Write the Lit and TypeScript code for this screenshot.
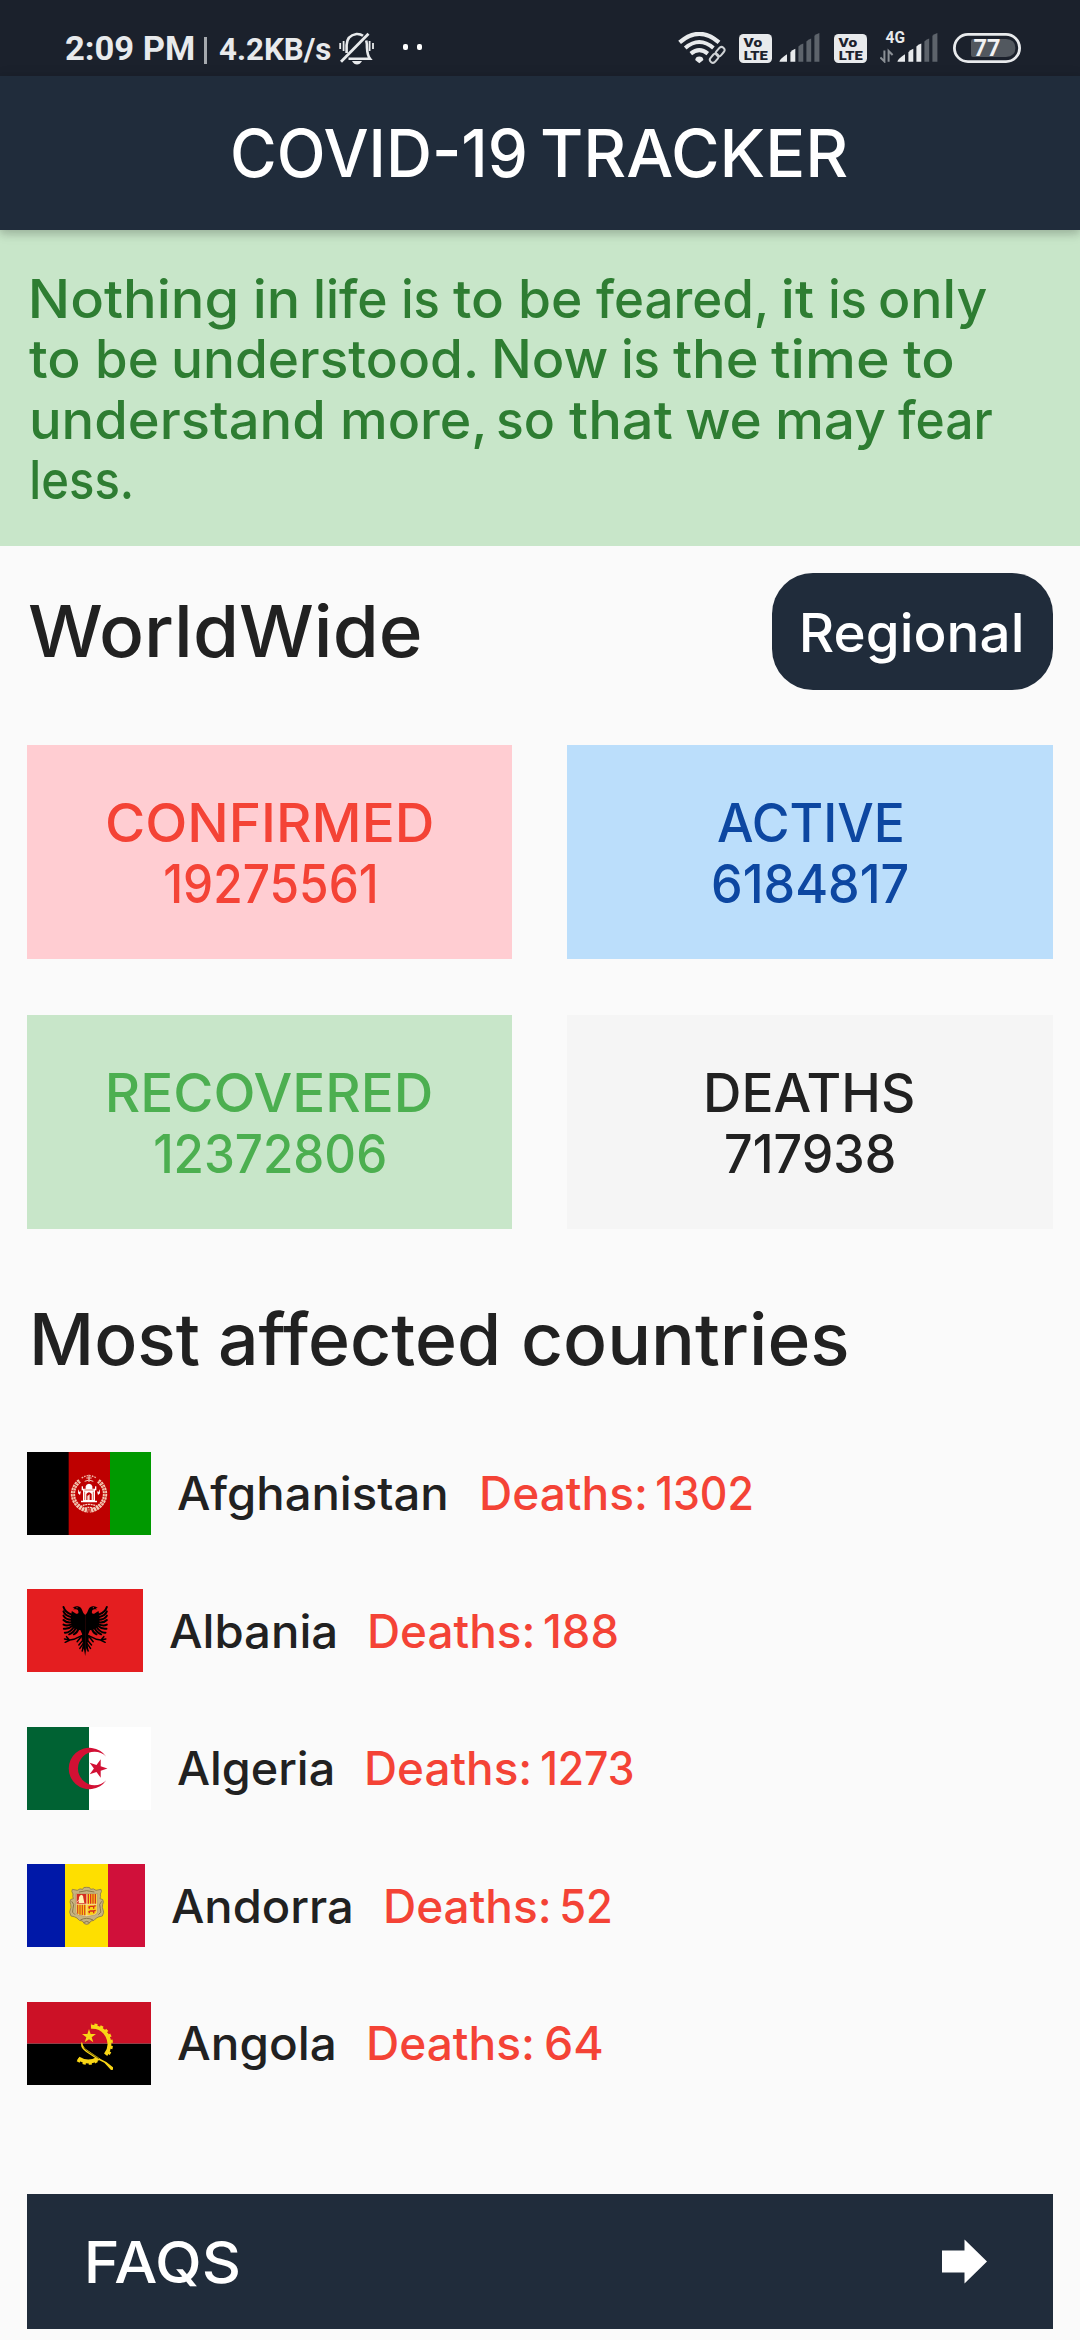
import { LitElement, html, svg, css, TemplateResult } from "lit";
import { customElement, property } from "lit/decorators.js";
import { classMap } from "lit/directives/class-map.js";

/** A run of text whose visible glyphs fill exactly `ink` pixels. */
@customElement("fit-text")
class FitText extends LitElement {
  @property() text = "";
  @property({ type: Number }) ink = 0;

  static styles = css`
    :host { display: block; flex: none; white-space: pre; }
    .glyphs { display: inline-block; transform-origin: 0 50%; }
  `;

  updated() {
    const cs = getComputedStyle(this);
    const ctx = document.createElement("canvas").getContext("2d")!;
    ctx.font = `${cs.fontWeight} ${cs.fontSize} ${cs.fontFamily}`;
    const m = ctx.measureText(this.text);
    const natural = m.actualBoundingBoxLeft + m.actualBoundingBoxRight;
    const k = this.ink / natural;
    const span = this.renderRoot.querySelector<HTMLElement>(".glyphs")!;
    span.style.transform = `translateX(${(m.actualBoundingBoxLeft * k).toFixed(2)}px) scaleX(${k.toFixed(4)})`;
    this.style.width = `${this.ink}px`;
  }

  render() {
    return html`<span class="glyphs">${this.text}</span>`;
  }
}

/** A word with the extent of its glyphs, measured from the start of its line. */
type Word = [text: string, from: number, to: number];

const line = (words: Word[], unit = 1) =>
  words.map(
    ([text, from, to], i) => html`<fit-text
      style="margin-left:${((from - (i ? words[i - 1][2] : 0)) * unit).toFixed(2)}px"
      text=${text}
      ink=${((to - from) * unit).toFixed(2)}
    ></fit-text> `
  );

const star = (cx: number, cy: number, r: number, turn: number, inner = 0.382) =>
  Array.from({ length: 10 }, (_, i) => {
    const a = ((turn + i * 36) * Math.PI) / 180;
    const d = i % 2 ? r * inner : r;
    return `${(cx + d * Math.cos(a)).toFixed(1)},${(cy + d * Math.sin(a)).toFixed(1)}`;
  }).join(" ");

const afghanistan = svg`
  <rect width="126" height="249" fill="#000"/>
  <rect x="125" width="125" height="249" fill="#be0000"/>
  <rect x="249" width="123" height="249" fill="#009900"/>
  <g fill="none">
    <path d="M158 87 A48 48 0 0 0 152 160 Q165 174 184 176 M214 87 A48 48 0 0 1 220 160 Q207 174 188 176" stroke="#f3c9b4" stroke-width="13" stroke-dasharray="7 2"/>
    <path d="M158 87 A48 48 0 0 0 152 160 M214 87 A48 48 0 0 1 220 160" stroke="#d4573f" stroke-width="3" stroke-dasharray="5 4"/>
    <path d="M164 78 Q186 64 208 78" stroke="#f0b9a5" stroke-width="4" stroke-dasharray="5 3"/>
    <path d="M173 88 Q186 80 199 88 M178 78 h16 M186 68 v22" stroke="#f3cfc0" stroke-width="3"/>
    <path d="M160 164 Q186 150 212 164 M166 172 Q186 160 206 172" stroke="#f3cfc0" stroke-width="4" stroke-dasharray="6 2"/>
  </g>
  <g fill="#fff">
    <path d="M176 110 V103 Q178 95 186 95 Q194 95 196 103 V110 H204 V146 H210 V151 H162 V146 H168 V110 Z"/>
    <path d="M154 112 l4 9 4-4 -3 12 -6-5 Z M218 112 l-4 9 -4-4 3 12 6-5 Z"/>
    <rect x="164" y="103" width="4" height="12"/><rect x="204" y="103" width="4" height="12"/>
  </g>
  <path d="M178 144 V126 Q186 116 194 126 V144 Z" fill="#be0000"/>
  <path d="M181 144 V132 L188 127 V144 Z" fill="#f8e0d5"/>
  <path d="M172 114 H200 M173 119 V144 M199 119 V144" stroke="#d4573f" stroke-width="2.5"/>`;

const eagleHalf = svg`
  <path d="M0 78 Q-7 72 -9 64 Q-12 54 -22 52 Q-30 50 -38 56 L-31 57 L-36 61 L-27 61 Q-20 62 -20 69 Q-19 76 -27 74 L-40 66 Q-44 80 -43 96 Q-42 112 -30 120 L-14 124 L-9 136 Q-12 142 -10 152 L-7 162 L-9 180 L-4 178 L0 201 Z"/>
  <g fill="none" stroke="#000" stroke-linecap="round">
    <g stroke-width="6">
      <path d="M-42 76 Q-60 70 -65 54"/><path d="M-42 84 Q-60 80 -65 67"/>
      <path d="M-41 92 Q-58 92 -65 80"/><path d="M-41 100 Q-57 102 -65 93"/>
      <path d="M-40 106 Q-55 112 -65 107"/><path d="M-38 110 Q-52 122 -64 119"/>
      <path d="M-34 114 Q-46 132 -61 131"/><path d="M-28 117 Q-36 132 -48 136"/>
      <path d="M-20 119 Q-24 132 -34 136"/>
    </g>
    <g stroke-width="4.5">
      <path d="M-10 140 Q-24 146 -34 151 L-46 153 L-62 150 M-46 153 L-60 160 M-48 152 L-56 143"/>
      <path d="M-7 154 L-19 168"/><path d="M-6 164 L-16 178"/><path d="M-11 142 L-24 158"/>
      <path d="M-5 174 L-9 186"/>
    </g>
  </g>`;

const albania = svg`
  <rect width="348" height="249" fill="#e41e20"/>
  <g transform="translate(174.5 0)">${eagleHalf}</g>
  <g transform="translate(174.5 0) scale(-1 1)">${eagleHalf}</g>
  <circle cx="150" cy="56" r="1.8" fill="#e41e20"/><circle cx="199" cy="56" r="1.8" fill="#e41e20"/>`;

const algeria = svg`
  <rect width="186" height="249" fill="#006233"/>
  <rect x="186" width="186" height="249" fill="#fff"/>
  <path d="M238 89 A62 62 0 1 0 238 160 A50 50 0 1 1 238 89 Z" fill="#d21034"/>
  <polygon points=${star(212, 124.5, 29.5, 0)} fill="#d21034"/>`;

const andorra = svg`
  <rect width="115" height="249" fill="#0018a8"/>
  <rect x="114" width="130" height="249" fill="#fedf00"/>
  <rect x="243" width="111" height="249" fill="#d0103a"/>
  <path d="M167 76 Q168 68 179 70 Q190 68 191 76 Q199 72 207 79 L222 76 Q226 82 220 90 Q222 98 219 104 Q230 104 229 114 Q226 122 226 130 Q234 146 226 156 Q214 158 208 162 Q202 172 192 171 Q186 182 179 181 Q172 182 166 171 Q156 172 150 162 Q144 158 132 156 Q124 146 132 130 Q132 122 129 114 Q128 104 139 104 Q136 98 138 90 Q132 82 136 76 L151 79 Q159 72 167 76 Z" fill="#c7b37f" stroke="#8c7a4c" stroke-width="2.5"/>
  <path d="M134 112 Q144 120 138 134 Q132 146 144 152 M224 112 Q214 120 220 134 Q226 146 214 152 M160 168 Q179 158 198 168 M156 84 Q179 76 202 84 M170 176 Q179 168 188 176" fill="none" stroke="#7d6b3f" stroke-width="2.5"/>
  <path d="M147 89 H211 V142 Q211 153 198 154 L179 158 L160 154 Q147 153 147 142 Z" fill="#f6d9a8" stroke="#a08a55" stroke-width="1.5"/>
  <rect x="149" y="90" width="29" height="29" fill="#d52b1e"/>
  <path d="M156 100 Q158 92 164 92 Q170 94 169 102 L172 117 H155 Z" fill="#fff3b0"/>
  <path d="M150 115 l6-8" stroke="#fff" stroke-width="2"/>
  <rect x="181" y="90" width="28" height="29" fill="#fbd116"/>
  <path d="M184 90 V119 M191 90 V119 M198 90 V119 M205 90 V119" stroke="#d52b1e" stroke-width="3.6"/>
  <path d="M149 122 H178 V154 L160 152 Q149 151 149 142 Z" fill="#fbd116"/>
  <path d="M152 122 V149 M159 122 V152 M166 122 V153 M173 122 V154" stroke="#d5481e" stroke-width="3.6"/>
  <path d="M181 122 H209 V142 Q209 151 198 152 L181 154 Z" fill="#fbd116"/>
  <path d="M184 130 L190 127 H200 L206 125 M187 130 V134 M200 129 V134 M184 144 L190 141 H200 L206 139 M187 144 V148 M200 143 V148" fill="none" stroke="#d52b1e" stroke-width="4"/>`;

const angola = svg`
  <rect width="372" height="125" fill="#cc1126"/>
  <rect y="125" width="372" height="124" fill="#000"/>
  <g fill="none" stroke="#f9d616">
    <path d="M192 74 A52 52 0 0 1 236 158" stroke-width="12"/>
    <path d="M192 70 A56 56 0 0 1 240 161" stroke-width="11" stroke-dasharray="9 8.5" stroke-dashoffset="-10"/>
    <path d="M154 169 Q184 188 214 169" stroke-width="12"/>
    <path d="M152 173 Q184 193 214 173" stroke-width="11" stroke-dasharray="9 8.5"/>
  </g>
  <path d="M163 121 Q160 134 168 142 Q176 151 190 158 L208 170 L232 182 L252 204 L258 203 L258 196 L238 180 L222 172 L202 158 L180 143 Q168 136 166 122 Z" fill="#f9d616"/>
  <path d="M170 137 Q180 148 196 157 L216 170" fill="none" stroke="#000" stroke-width="1.6"/>
  <polygon points=${star(186, 103, 22, -90)} fill="#f9d616"/>`;

interface Country {
  flagWidth: number;
  flag: TemplateResult;
  name: Word;
  label: Word;
  deaths: Word;
}

const countries: Country[] = [
  { flagWidth: 124, flag: afghanistan, name: ["Afghanistan", 178, 446], label: ["Deaths:", 482, 645], deaths: ["1302", 657.3, 752] },
  { flagWidth: 116, flag: albania, name: ["Albania", 170, 335], label: ["Deaths:", 369.5, 532], deaths: ["188", 544.5, 616.5] },
  { flagWidth: 124, flag: algeria, name: ["Algeria", 178, 332], label: ["Deaths:", 367, 529.3], deaths: ["1273", 541.7, 632.5] },
  { flagWidth: 118, flag: andorra, name: ["Andorra", 172, 350.5], label: ["Deaths:", 386, 548.7], deaths: ["52", 561.7, 610.3] },
  { flagWidth: 124, flag: angola, name: ["Angola", 178, 333.5], label: ["Deaths:", 369, 532], deaths: ["64", 546, 601.5] },
];

const stats = [
  { kind: "confirmed", label: "CONFIRMED", labelInk: 325, value: "19275561", valueInk: 210 },
  { kind: "active", label: "ACTIVE", labelInk: 184, value: "6184817", valueInk: 194 },
  { kind: "recovered", label: "RECOVERED", labelInk: 322, value: "12372806", valueInk: 230 },
  { kind: "deaths", label: "DEATHS", labelInk: 206, value: "717938", valueInk: 168 },
];

const UNIT = 1080 / 1568;

const quote: Word[][] = [
  [["Nothing", 47, 342], ["in", 371, 431], ["life", 459, 560], ["is", 587, 637], ["to", 658, 729], ["be", 757, 843], ["feared,", 865, 1111], ["it", 1138, 1180], ["is", 1206, 1256], ["only", 1278, 1433]],
  [["to", 42, 114], ["be", 142, 227], ["understood.", 253, 690], ["Now", 719, 882], ["is", 906, 956], ["the", 977, 1098], ["time", 1119, 1288], ["to", 1311, 1383]],
  [["understand", 46, 467], ["more,", 498, 702], ["so", 723, 803], ["that", 826, 975], ["we", 996, 1103], ["may", 1129, 1285], ["fear", 1304, 1441]],
  [["less.", 47, 190]],
];

const sectionTitle: Word[] = [["Most", 49, 288], ["affected", 320, 722], ["countries", 761, 1230]];

const bellOff = html`<svg class="bell" width="35" height="33" viewBox="0 0 35 33">
  <g fill="none" stroke="#e8eaec" stroke-width="2.6">
    <path d="M7.6 21 V13 Q8 3.5 17.5 2 Q21.5 1.8 24 3.8"/>
    <path d="M27.2 8.5 Q28.2 12 28 16 Q28.4 23.5 31 26.8 H9.5"/>
    <path d="M2 29.8 L29.5 1.8" stroke-width="2.8"/>
    <path d="M1.2 11 V17 M4.6 9 V19 M30.6 9 V19 M34 11 V17" stroke-width="1.8"/>
  </g>
  <path d="M13 29 H23 Q21 32.6 18 32.6 Q15 32.6 13 29 Z" fill="#e8eaec"/>
</svg>`;

const wifi = html`<svg class="wifi" width="48" height="32" viewBox="0 0 48 32">
  <g fill="none" stroke="#e8eaec">
    <path d="M1.6 10.4 Q21.3 -6.6 41 10.4" stroke-width="4.2"/>
    <path d="M7.2 16 Q21.3 4 35.4 16" stroke-width="4"/>
    <path d="M12.8 21.6 Q21.3 14.6 29.8 21.6" stroke-width="4"/>
    <g stroke="#1b212c" stroke-width="5.6"><rect x="-6" y="-3.2" width="12" height="6.4" rx="3.2" transform="translate(40.5 20.5) rotate(-50)"/></g>
    <g stroke="#cfd2d5" stroke-width="2">
      <rect x="-5" y="-3" width="10" height="6" rx="3" transform="translate(42.2 19.6) rotate(-50)"/>
      <rect x="-5" y="-3" width="10" height="6" rx="3" transform="translate(36.2 26.2) rotate(-50)"/>
    </g>
  </g>
  <path d="M21.3 31.2 L17.2 28 Q17.6 24.6 21.3 24.6 Q25 24.6 25.4 28 Z" fill="#e8eaec"/>
</svg>`;

const volte = html`<svg width="33" height="29" viewBox="0 0 33 29">
  <rect width="33" height="29" rx="4.5" fill="#e8eaec"/>
  <g class="volte-text">
    <text x="4.6" y="12.8" font-size="12.6" textLength="18.6" lengthAdjust="spacingAndGlyphs">Vo</text>
    <text x="4.8" y="25.8" font-size="13.2" textLength="24" lengthAdjust="spacingAndGlyphs">LTE</text>
  </g>
</svg>`;

const signal = (level: number) => html`<svg width="41" height="30" viewBox="0 0 41 30">
  ${[
    "M0.4 28.8 Q0.6 25.8 8 21.2 V28.8 Z",
    "M11.4 28.8 V19.2 Q13 17 16.3 15.8 V28.8 Z",
    "M19.4 28.8 V13.6 Q21 11.8 24.3 10.6 V28.8 Z",
    "M27.4 28.8 V8.4 Q29 6.6 32.2 5.4 V28.8 Z",
    "M35.4 28.8 V2.8 Q37 1 40.4 0 V28.8 Z",
  ].map((d, i) => svg`<path d=${d} fill=${i < level ? "#e8eaec" : "#5d636b"}/>`)}
</svg>`;

const network = html`<svg class="network" width="26" height="36" viewBox="0 -4 26 36">
  <text class="network-text" x="5.6" y="12.4" font-size="16" textLength="19.4" lengthAdjust="spacingAndGlyphs">4G</text>
  <path d="M4.4 19.5 V30.4 L0.4 26.4 M8.6 30.8 V20 L12.6 24" fill="none" stroke="#8b9096" stroke-width="2"/>
</svg>`;

const battery = html`<svg width="68" height="30" viewBox="0 0 68 30">
  <rect x="1.4" y="1.4" width="65.2" height="27.2" rx="13.6" fill="none" stroke="#e8eaec" stroke-width="2.8"/>
  <path d="M20 6 H53 Q62.4 6.6 62.4 15 Q62.4 23.4 53 24 H20 Q18 24 18 22 V8 Q18 6 20 6 Z" fill="#52585f"/>
  <text class="battery-text" x="20.6" y="23.4" font-size="23.6" textLength="27" lengthAdjust="spacingAndGlyphs">77</text>
</svg>`;

@customElement("app-root")
class AppRoot extends LitElement {
  static styles = css`
    :host {
      display: block;
      width: 1080px;
      height: 2340px;
      overflow: hidden;
      background: #fafafa;
      color: #212121;
      font-family: Inter, "Open Sans", "Liberation Sans", sans-serif;
      font-weight: 500;
    }
    svg { display: block; flex: none; }
    .status {
      display: flex;
      height: 76px;
      box-sizing: border-box;
      padding: 0 59px 0 66px;
      background: #1b212c;
      color: #e8eaec;
      font-family: Roboto, sans-serif;
      font-weight: 700;
    }
    .clock { display: flex; align-items: baseline; padding-top: 28px; height: 40px; line-height: 40px; }
    .time { font-size: 34px; }
    .divider { width: 3px; height: 27px; margin: 9px 11.5px 0 10.5px; align-self: flex-start; background: #a5a9ae; }
    .speed { font-size: 32px; }
    .bell { margin: 32px 0 0 8px; }
    .dots { display: flex; gap: 9px; padding: 44px 0 0 29px; }
    .dot { width: 5px; height: 6px; border-radius: 2px; background: #fff; }
    .indicators { display: flex; margin-left: auto; padding-top: 33px; }
    .wifi { margin: -1px 13px 0 0; }
    .lte { display: flex; gap: 6.5px; }
    .lte svg:first-child { margin-top: 1px; }
    .lte-second { gap: 0; margin: 0 15px 0 14px; }
    .network { margin: -6px -9px 0 13.5px; }
    .volte-text { fill: #1b212c; font-family: Roboto, sans-serif; font-weight: 900; }
    .network-text { fill: #e8eaec; font-family: Roboto, sans-serif; font-weight: 700; }
    .battery-text { fill: #f2f3f4; font-family: Roboto, sans-serif; font-weight: 700; }

    .bar {
      display: flex;
      align-items: center;
      justify-content: center;
      gap: 17.5px;
      height: 154px;
      box-sizing: border-box;
      padding-bottom: 1px;
      position: relative;
      background: #202c3b;
      color: #fff;
      font-size: 66px;
      line-height: 80px;
      box-shadow: 0 4px 8px rgba(0, 0, 0, 0.16), 0 2px 14px rgba(0, 0, 0, 0.1);
    }
    .quote {
      height: 316px;
      box-sizing: border-box;
      padding-top: 39.2px;
      background: #c8e6c9;
      color: #2e7d32;
      font-size: 53px;
      line-height: 60.3px;
    }
    .quote-line { display: flex; }
    .heading {
      display: flex;
      justify-content: space-between;
      align-items: center;
      padding: 27.5px 27.5px 54.5px 29px;
      height: 116.5px;
    }
    .heading-text { font-size: 71.5px; line-height: 80px; margin-top: -1px; }
    .region {
      display: flex;
      align-items: center;
      justify-content: center;
      width: 281px;
      height: 117px;
      box-sizing: border-box;
      padding-top: 3px;
      border-radius: 41px;
      background: #202c3b;
      color: #fff;
      font-size: 53px;
      line-height: 64px;
    }
    .stats { display: grid; grid-template-columns: 1fr 1fr; gap: 55.5px 55px; padding: 0 27.5px 0 27px; }
    .stat {
      display: flex;
      flex-direction: column;
      align-items: center;
      height: 214.5px;
      box-sizing: border-box;
      padding-top: 48px;
      font-size: 53px;
      line-height: 61px;
    }
    .confirmed { background: #ffcdd2; color: #f44336; }
    .active { background: #bbdefb; color: #0d47a1; }
    .recovered { background: #c8e6c9; color: #4caf50; }
    .deaths { background: #f5f5f5; color: #212121; }
    .section { display: flex; padding-top: 70px; height: 153px; font-size: 71.5px; line-height: 80px; }
    .countries { display: flex; flex-direction: column; gap: 55px; font-size: 46px; line-height: 56px; }
    .country { display: flex; align-items: center; height: 82.5px; padding-left: 27px; }
    .toll { display: flex; color: #f44336; }
    .faq {
      display: flex;
      align-items: center;
      justify-content: space-between;
      height: 135.5px;
      box-sizing: border-box;
      margin: 109px 27.5px 0 27px;
      padding: 0 65.5px 0 61px;
      background: #202c3b;
      color: #fff;
      font-size: 58px;
      line-height: 70px;
    }
    .faq-text { padding-top: 2px; }
  `;

  private country(c: Country) {
    const flagEnd = 27 + c.flagWidth;
    const name: Word = [c.name[0], c.name[1] - flagEnd, c.name[2] - flagEnd];
    const toll = [c.label, c.deaths].map(([t, a, b]) => [t, a - c.name[2], b - c.name[2]] as Word);
    return html`<div class="country">
      <svg width=${c.flagWidth} height="83" viewBox="0 0 ${c.flagWidth * 3} 249" preserveAspectRatio="none">${c.flag}</svg>
      ${line([name])}
      <div class="toll">${line(toll)}</div>
    </div>`;
  }

  render() {
    return html`
      <header class="status">
        <div class="clock">
          <fit-text class="time" text="2:09 PM" ink="127.5"></fit-text>
          <span class="divider"></span>
          <fit-text class="speed" text="4.2KB/s" ink="112"></fit-text>
        </div>
        ${bellOff}
        <div class="dots"><span class="dot"></span><span class="dot"></span></div>
        <div class="indicators">
          ${wifi}
          <div class="lte">${volte}${signal(2)}</div>
          <div class="lte lte-second">${volte}${network}${signal(3)}</div>
          ${battery}
        </div>
      </header>
      <div class="bar">
        <fit-text text="COVID-19" ink="291.5"></fit-text>
        <fit-text text="TRACKER" ink="304.5"></fit-text>
      </div>
      <section class="quote">
        ${quote.map((words) => html`<div class="quote-line">${line(words, UNIT)}</div>`)}
      </section>
      <div class="heading">
        <fit-text class="heading-text" text="WorldWide" ink="390.5"></fit-text>
        <div class="region"><fit-text text="Regional" ink="218"></fit-text></div>
      </div>
      <section class="stats">
        ${stats.map(
          (s) => html`<div class=${classMap({ stat: true, [s.kind]: true })}>
            <fit-text text=${s.label} ink=${s.labelInk}></fit-text>
            <fit-text text=${s.value} ink=${s.valueInk}></fit-text>
          </div>`
        )}
      </section>
      <div class="section">${line(sectionTitle, UNIT)}</div>
      <section class="countries">${countries.map((c) => this.country(c))}</section>
      <div class="faq">
        <fit-text class="faq-text" text="FAQS" ink="150.5"></fit-text>
        <svg width="45" height="45" viewBox="0 0 45 45"><path d="M0 11.5 H22.5 V0.5 L45 22.5 L22.5 44.5 V33.5 H0 Z" fill="#fff"/></svg>
      </div>
    `;
  }
}
